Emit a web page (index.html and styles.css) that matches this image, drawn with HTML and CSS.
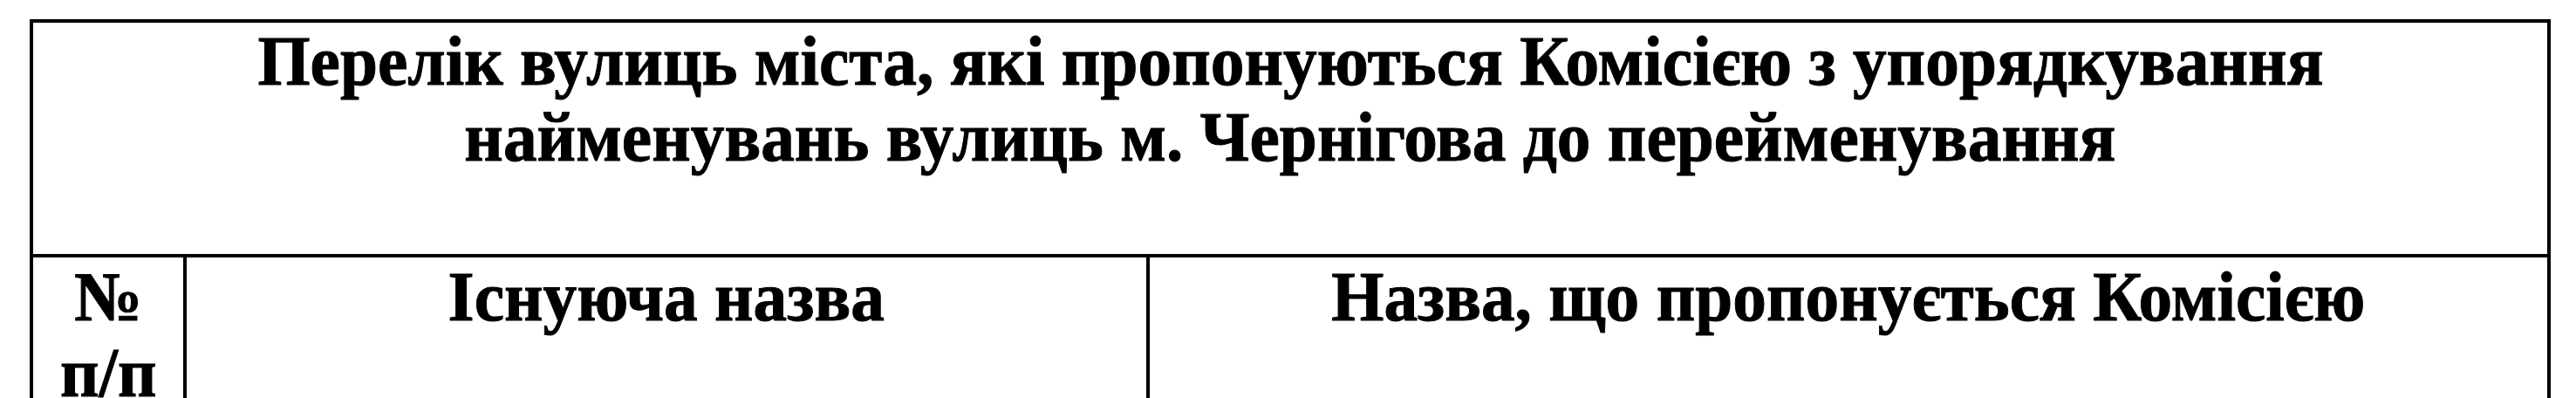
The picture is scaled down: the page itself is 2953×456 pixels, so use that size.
FILE: index.html
```html
<!DOCTYPE html>
<html lang="uk">
<head>
<meta charset="utf-8">
<title>Перелік вулиць</title>
<link rel="stylesheet" href="styles.css">
</head>
<body>
<div class="sheet">
  <div class="grid">
    <div class="cell title">
      <span class="line">Перелік вулиць міста, які пропонуються Комісією з упорядкування</span>
      <span class="line">найменувань вулиць м. Чернігова до перейменування</span>
    </div>
    <div class="cell head num"><span class="line">№</span><span class="line">п/п</span></div>
    <div class="cell head"><span class="line">Існуюча назва</span></div>
    <div class="cell head"><span class="line">Назва, що пропонується Комісією</span></div>
  </div>
</div>
</body>
</html>
```

FILE: styles.css
```css
html, body {
  margin: 0;
  padding: 0;
  background: #fff;
}

body {
  font-family: "Liberation Serif", "Times New Roman", serif;
  font-weight: bold;
  color: #000;
}

.sheet {
  padding: 22px 0 0 34px;
  height: 456px;
  overflow: hidden;
  box-sizing: border-box;
}

.grid {
  width: 2890px;
  box-sizing: border-box;
  display: grid;
  grid-template-columns: 172px 1100px 1602px;
  grid-template-rows: 265px 260px;
  gap: 4px;
  padding: 4px;
  background: #000;
}

.cell {
  background: #fff;
  font-size: 80px;
  line-height: 87px;
  display: flex;
  flex-direction: column;
  align-items: center;
}

.title {
  grid-column: 1 / 4;
  padding-top: 1px;
}

.head {
  padding-top: 2px;
}

.line {
  display: block;
  white-space: nowrap;
  transform: scaleX(0.967);
  transform-origin: center;
  -webkit-text-stroke: 1px #000;
}
```
